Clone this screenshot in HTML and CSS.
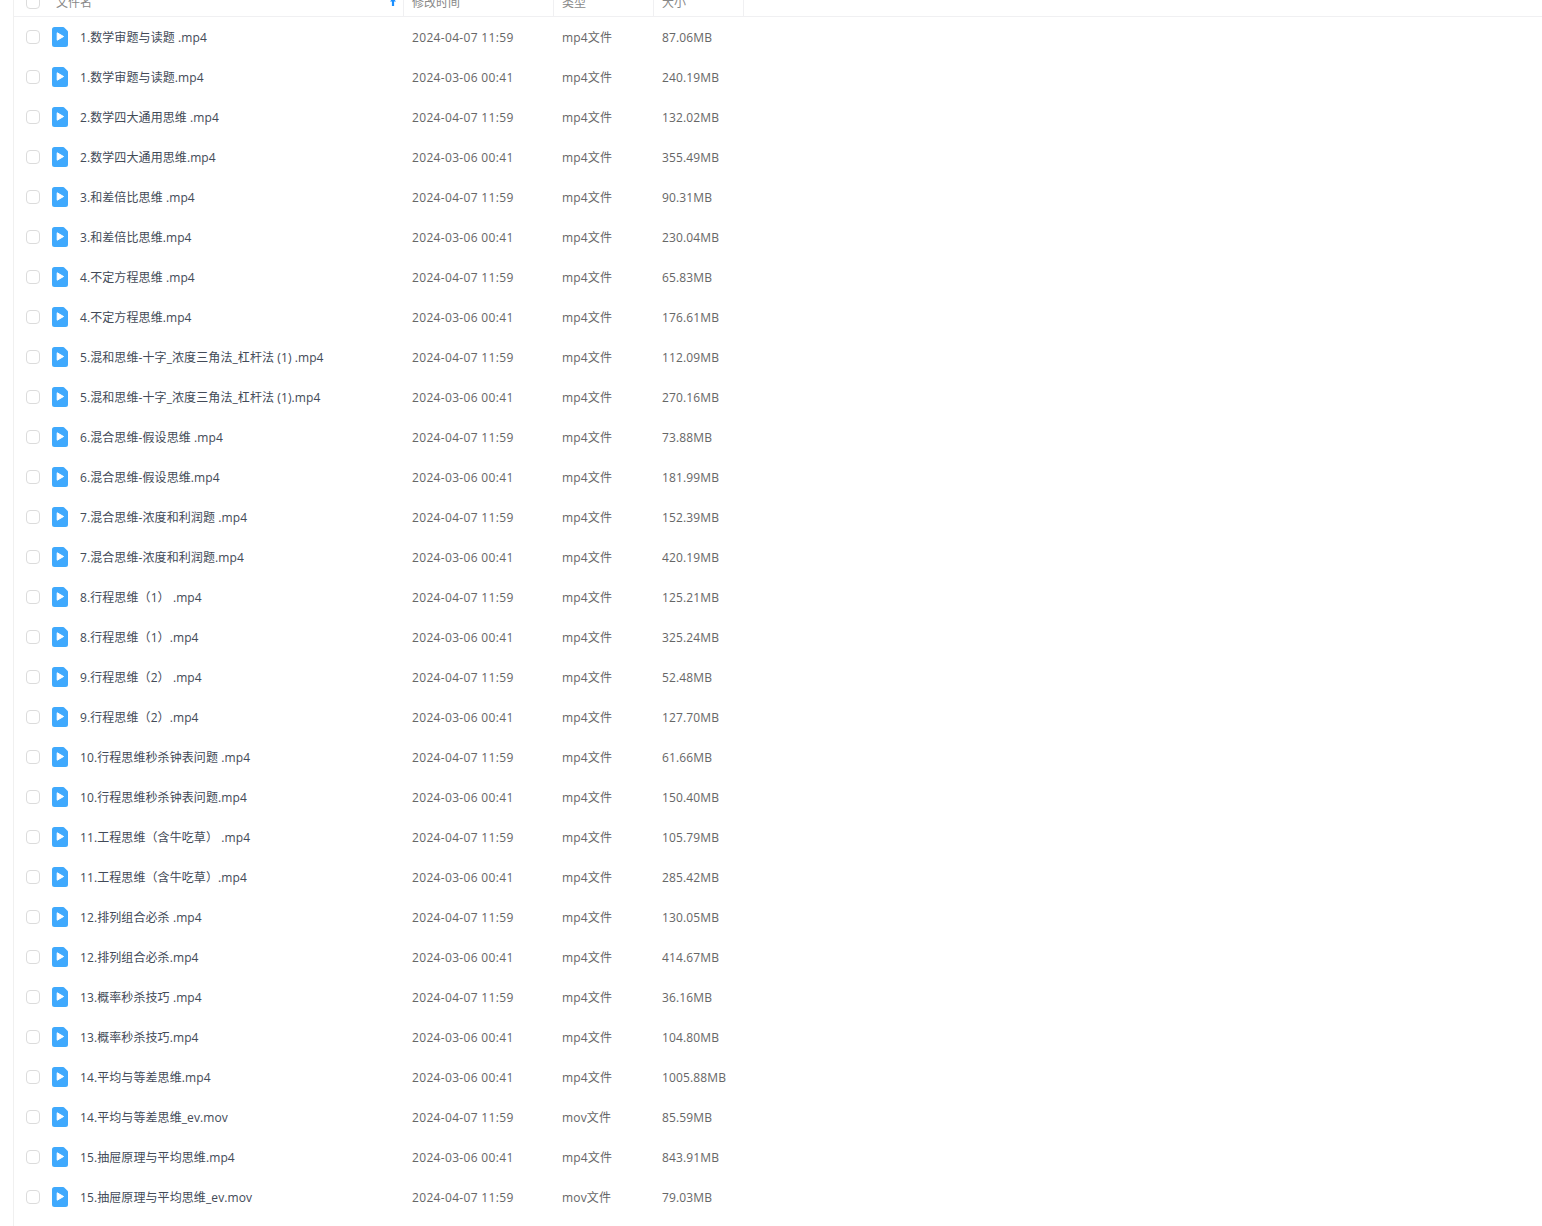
FILE: index.html
```html
<!DOCTYPE html>
<html lang="zh-CN">
<head>
<meta charset="utf-8">
<title>文件列表</title>
<link rel="stylesheet" href="styles.css">
</head>
<body>
<svg class="defs" width="0" height="0"><symbol id="v" viewBox="0 0 16 20"><path d="M2.5 0H11.2a1.5 1.5 0 0 1 1 .45L15.5 3.8a1.5 1.5 0 0 1 .5 1V17.5a2.5 2.5 0 0 1-2.5 2.5H2.5A2.5 2.5 0 0 1 0 17.5V2.5A2.5 2.5 0 0 1 2.5 0Z" fill="#3fa9fd"/><path d="M5.2 5.8 11.6 9.5 5.2 13.2Z" fill="#fff" stroke="#fff" stroke-width="1" stroke-linejoin="round"/></symbol></svg>
<main class="list">
<div class="head">
<div class="c name"><span class="box"></span><span class="hname">文件名</span><svg class="sort" viewBox="0 0 6 8"><path d="M3 0 6 3.4H4.1V8H1.9V3.4H0Z" fill="#1a8fff"/></svg></div>
<div class="c time">修改时间</div><div class="c type">类型</div><div class="c size">大小</div>
</div>
<div class="row"><div class="c name"><span class="box"></span><svg class="ico"><use href="#v"/></svg><span class="fn">1.数学审题与读题 .mp4</span></div><div class="c time">2024-04-07 11:59</div><div class="c type">mp4文件</div><div class="c size">87.06MB</div></div>
<div class="row"><div class="c name"><span class="box"></span><svg class="ico"><use href="#v"/></svg><span class="fn">1.数学审题与读题.mp4</span></div><div class="c time">2024-03-06 00:41</div><div class="c type">mp4文件</div><div class="c size">240.19MB</div></div>
<div class="row"><div class="c name"><span class="box"></span><svg class="ico"><use href="#v"/></svg><span class="fn">2.数学四大通用思维 .mp4</span></div><div class="c time">2024-04-07 11:59</div><div class="c type">mp4文件</div><div class="c size">132.02MB</div></div>
<div class="row"><div class="c name"><span class="box"></span><svg class="ico"><use href="#v"/></svg><span class="fn">2.数学四大通用思维.mp4</span></div><div class="c time">2024-03-06 00:41</div><div class="c type">mp4文件</div><div class="c size">355.49MB</div></div>
<div class="row"><div class="c name"><span class="box"></span><svg class="ico"><use href="#v"/></svg><span class="fn">3.和差倍比思维 .mp4</span></div><div class="c time">2024-04-07 11:59</div><div class="c type">mp4文件</div><div class="c size">90.31MB</div></div>
<div class="row"><div class="c name"><span class="box"></span><svg class="ico"><use href="#v"/></svg><span class="fn">3.和差倍比思维.mp4</span></div><div class="c time">2024-03-06 00:41</div><div class="c type">mp4文件</div><div class="c size">230.04MB</div></div>
<div class="row"><div class="c name"><span class="box"></span><svg class="ico"><use href="#v"/></svg><span class="fn">4.不定方程思维 .mp4</span></div><div class="c time">2024-04-07 11:59</div><div class="c type">mp4文件</div><div class="c size">65.83MB</div></div>
<div class="row"><div class="c name"><span class="box"></span><svg class="ico"><use href="#v"/></svg><span class="fn">4.不定方程思维.mp4</span></div><div class="c time">2024-03-06 00:41</div><div class="c type">mp4文件</div><div class="c size">176.61MB</div></div>
<div class="row"><div class="c name"><span class="box"></span><svg class="ico"><use href="#v"/></svg><span class="fn">5.混和思维-十字_浓度三角法_杠杆法 (1) .mp4</span></div><div class="c time">2024-04-07 11:59</div><div class="c type">mp4文件</div><div class="c size">112.09MB</div></div>
<div class="row"><div class="c name"><span class="box"></span><svg class="ico"><use href="#v"/></svg><span class="fn">5.混和思维-十字_浓度三角法_杠杆法 (1).mp4</span></div><div class="c time">2024-03-06 00:41</div><div class="c type">mp4文件</div><div class="c size">270.16MB</div></div>
<div class="row"><div class="c name"><span class="box"></span><svg class="ico"><use href="#v"/></svg><span class="fn">6.混合思维-假设思维 .mp4</span></div><div class="c time">2024-04-07 11:59</div><div class="c type">mp4文件</div><div class="c size">73.88MB</div></div>
<div class="row"><div class="c name"><span class="box"></span><svg class="ico"><use href="#v"/></svg><span class="fn">6.混合思维-假设思维.mp4</span></div><div class="c time">2024-03-06 00:41</div><div class="c type">mp4文件</div><div class="c size">181.99MB</div></div>
<div class="row"><div class="c name"><span class="box"></span><svg class="ico"><use href="#v"/></svg><span class="fn">7.混合思维-浓度和利润题 .mp4</span></div><div class="c time">2024-04-07 11:59</div><div class="c type">mp4文件</div><div class="c size">152.39MB</div></div>
<div class="row"><div class="c name"><span class="box"></span><svg class="ico"><use href="#v"/></svg><span class="fn">7.混合思维-浓度和利润题.mp4</span></div><div class="c time">2024-03-06 00:41</div><div class="c type">mp4文件</div><div class="c size">420.19MB</div></div>
<div class="row"><div class="c name"><span class="box"></span><svg class="ico"><use href="#v"/></svg><span class="fn">8.行程思维（1） .mp4</span></div><div class="c time">2024-04-07 11:59</div><div class="c type">mp4文件</div><div class="c size">125.21MB</div></div>
<div class="row"><div class="c name"><span class="box"></span><svg class="ico"><use href="#v"/></svg><span class="fn">8.行程思维（1）.mp4</span></div><div class="c time">2024-03-06 00:41</div><div class="c type">mp4文件</div><div class="c size">325.24MB</div></div>
<div class="row"><div class="c name"><span class="box"></span><svg class="ico"><use href="#v"/></svg><span class="fn">9.行程思维（2） .mp4</span></div><div class="c time">2024-04-07 11:59</div><div class="c type">mp4文件</div><div class="c size">52.48MB</div></div>
<div class="row"><div class="c name"><span class="box"></span><svg class="ico"><use href="#v"/></svg><span class="fn">9.行程思维（2）.mp4</span></div><div class="c time">2024-03-06 00:41</div><div class="c type">mp4文件</div><div class="c size">127.70MB</div></div>
<div class="row"><div class="c name"><span class="box"></span><svg class="ico"><use href="#v"/></svg><span class="fn">10.行程思维秒杀钟表问题 .mp4</span></div><div class="c time">2024-04-07 11:59</div><div class="c type">mp4文件</div><div class="c size">61.66MB</div></div>
<div class="row"><div class="c name"><span class="box"></span><svg class="ico"><use href="#v"/></svg><span class="fn">10.行程思维秒杀钟表问题.mp4</span></div><div class="c time">2024-03-06 00:41</div><div class="c type">mp4文件</div><div class="c size">150.40MB</div></div>
<div class="row"><div class="c name"><span class="box"></span><svg class="ico"><use href="#v"/></svg><span class="fn">11.工程思维（含牛吃草） .mp4</span></div><div class="c time">2024-04-07 11:59</div><div class="c type">mp4文件</div><div class="c size">105.79MB</div></div>
<div class="row"><div class="c name"><span class="box"></span><svg class="ico"><use href="#v"/></svg><span class="fn">11.工程思维（含牛吃草）.mp4</span></div><div class="c time">2024-03-06 00:41</div><div class="c type">mp4文件</div><div class="c size">285.42MB</div></div>
<div class="row"><div class="c name"><span class="box"></span><svg class="ico"><use href="#v"/></svg><span class="fn">12.排列组合必杀 .mp4</span></div><div class="c time">2024-04-07 11:59</div><div class="c type">mp4文件</div><div class="c size">130.05MB</div></div>
<div class="row"><div class="c name"><span class="box"></span><svg class="ico"><use href="#v"/></svg><span class="fn">12.排列组合必杀.mp4</span></div><div class="c time">2024-03-06 00:41</div><div class="c type">mp4文件</div><div class="c size">414.67MB</div></div>
<div class="row"><div class="c name"><span class="box"></span><svg class="ico"><use href="#v"/></svg><span class="fn">13.概率秒杀技巧 .mp4</span></div><div class="c time">2024-04-07 11:59</div><div class="c type">mp4文件</div><div class="c size">36.16MB</div></div>
<div class="row"><div class="c name"><span class="box"></span><svg class="ico"><use href="#v"/></svg><span class="fn">13.概率秒杀技巧.mp4</span></div><div class="c time">2024-03-06 00:41</div><div class="c type">mp4文件</div><div class="c size">104.80MB</div></div>
<div class="row"><div class="c name"><span class="box"></span><svg class="ico"><use href="#v"/></svg><span class="fn">14.平均与等差思维.mp4</span></div><div class="c time">2024-03-06 00:41</div><div class="c type">mp4文件</div><div class="c size">1005.88MB</div></div>
<div class="row"><div class="c name"><span class="box"></span><svg class="ico"><use href="#v"/></svg><span class="fn">14.平均与等差思维_ev.mov</span></div><div class="c time">2024-04-07 11:59</div><div class="c type">mov文件</div><div class="c size">85.59MB</div></div>
<div class="row"><div class="c name"><span class="box"></span><svg class="ico"><use href="#v"/></svg><span class="fn">15.抽屉原理与平均思维.mp4</span></div><div class="c time">2024-03-06 00:41</div><div class="c type">mp4文件</div><div class="c size">843.91MB</div></div>
<div class="row"><div class="c name"><span class="box"></span><svg class="ico"><use href="#v"/></svg><span class="fn">15.抽屉原理与平均思维_ev.mov</span></div><div class="c time">2024-04-07 11:59</div><div class="c type">mov文件</div><div class="c size">79.03MB</div></div>
</main>
</body>
</html>
```
FILE: styles.css
```css
html, body { margin: 0; padding: 0; height: 100%; overflow: hidden; background: #fff; }
body { font-family: "Open Sans", "Noto Sans CJK SC", sans-serif; font-size: 12px; color: #666; }
.defs { display: block; height: 0; }
.list { margin: -23px 0 0 13px; border-left: 1px solid #f0f0f0; min-height: 1300px; }
.head, .row { display: grid; grid-template-columns: 390px 150px 100px 90px; }
.head { height: 39px; border-bottom: 1px solid #f0f0f2; }
.row { height: 40px; align-items: center; }
.c { padding-left: 8px; white-space: nowrap; }
.time { letter-spacing: 0.33px; }
.size, .type { letter-spacing: 0.15px; }
.head .c { display: flex; align-items: center; color: #888; height: 39px; padding-top: 11px; border-right: 1px solid #f0f0f2; box-sizing: border-box; letter-spacing: 0; }
.name { display: flex; align-items: center; padding-left: 12px; }
.head .name { padding-left: 12px; }
.box { width: 12px; height: 12px; border: 1px solid #dcdcdc; border-radius: 4px; flex: none; background: #fff; }
.ico { width: 16px; height: 20px; margin-left: 12px; flex: none; }
.fn { margin-left: 12px; color: #424a57; letter-spacing: 0.09px; }
.hname { margin-left: 16px; flex: 1; }
.sort { width: 6px; height: 8px; margin-right: 7px; flex: none; }
```
